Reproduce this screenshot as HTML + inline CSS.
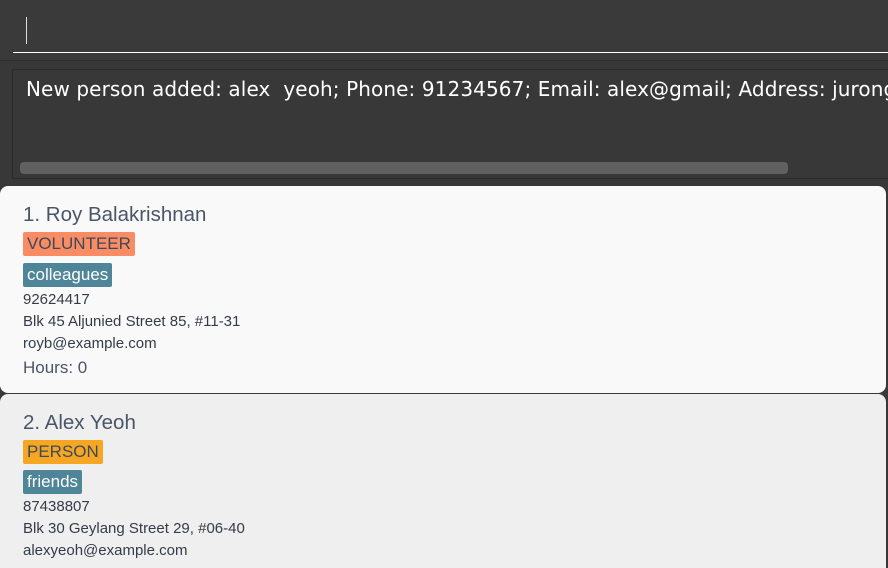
<!DOCTYPE html>
<html style="overflow:hidden;height:568px"><head><style>
body{margin:0;width:888px;height:568px;background:#383838;overflow:hidden;position:relative;font-family:"Liberation Sans",sans-serif}
.top{position:absolute;left:0;top:0;width:888px;height:60px;background:#3a3a3a;border-bottom:1px solid #2e2e2e}
.line{position:absolute;left:13px;top:52px;width:875px;height:1px;background:#fff}
.caret{position:absolute;left:26px;top:17px;width:1px;height:27px;background:#ddd}
.res{position:absolute;left:12px;top:69px;width:880px;height:108px;background:#383838;border:1px solid #2a2a2a}
.msg{position:absolute;left:26px;top:77px;color:#fff;font-family:"DejaVu Sans",sans-serif;font-size:20px;letter-spacing:0.1px;white-space:nowrap}
.thumb{position:absolute;left:20px;top:162px;width:768px;height:12px;border-radius:4px;background:#606060}
.card{position:absolute;left:0;width:886px;border-radius:8px;color:#4a5568;overflow:hidden}
.name{position:absolute;left:23px;font-size:20.5px}
.tag{position:absolute;left:23px;height:24px;line-height:24px;padding:0 4px;border-radius:2px;font-size:17px}
.sm{position:absolute;left:23px;font-size:15px;color:#333c48}
</style></head><body>
<div class="top"><div class="caret"></div><div class="line"></div></div>
<div class="res"></div>
<div class="msg">New person added: alex&nbsp; yeoh; Phone: 91234567; Email: alex@gmail; Address: jurong</div>
<div class="thumb"></div>
<div class="card" style="top:186px;height:207px;background:#f9f9f9">
<div class="name" style="top:17px">1. Roy Balakrishnan</div>
<div class="tag" style="top:46px;background:#f98c65;color:#3d4a5a">VOLUNTEER</div>
<div class="tag" style="top:77px;background:#4f8599;color:#fff">colleagues</div>
<div class="sm" style="top:105px">92624417</div>
<div class="sm" style="top:127px">Blk 45 Aljunied Street 85, #11-31</div>
<div class="sm" style="top:149px">royb@example.com</div>
<div class="name" style="top:172px;font-size:17px">Hours: 0</div>
</div>
<div class="card" style="top:394px;height:174px;background:#efefef;border-radius:8px 8px 0 0">
<div class="name" style="top:17px">2. Alex Yeoh</div>
<div class="tag" style="top:46px;background:#f5a623;color:#3d4a5a">PERSON</div>
<div class="tag" style="top:76px;background:#4f8599;color:#fff">friends</div>
<div class="sm" style="top:104px">87438807</div>
<div class="sm" style="top:126px">Blk 30 Geylang Street 29, #06-40</div>
<div class="sm" style="top:148px">alexyeoh@example.com</div>
</div>
</body></html>
